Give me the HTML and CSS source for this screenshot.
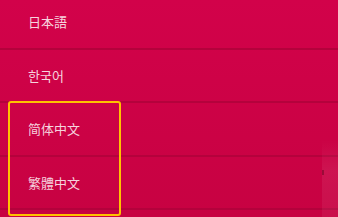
FILE: index.html
```html
<!DOCTYPE html>
<html>
<head>
	<meta charset="UTF-8">
	<title>Language</title>
	<link rel="stylesheet" href="styles.css">
</head>
<body>
	<div class="screen">
		<ul class="lang-list">
			<li class="lang-item lang-jp">日本語</li>
			<li class="lang-item lang-kr">한국어</li>
			<li class="lang-item lang-sc">简体中文</li>
			<li class="lang-item lang-tc">繁體中文</li>
		</ul>
		<div class="focus-box"></div>
		<div class="side-fade"><span class="side-notch"></span></div>
	</div>
</body>
</html>
```

FILE: styles.css
```css
* {
	margin: 0;
	padding: 0;
	box-sizing: border-box;
}

html, body {
	width: 100%;
	height: 100%;
	overflow: hidden;
}

.screen {
	position: relative;
	width: 338px;
	height: 217px;
	overflow: hidden;
	background: linear-gradient(to bottom, #d2024a, #c70242);
}

.lang-list {
	list-style: none;
	margin-top: -4px;
}

.lang-item {
	display: flex;
	align-items: center;
	height: 53.5px;
	padding-left: 28px;
	border-bottom: 2px solid #b4023c;
	color: #f6d3de;
	font-size: 13px;
	font-family: "Noto Sans CJK SC", sans-serif;
}

.lang-jp { font-family: "Noto Sans CJK JP", sans-serif; }
.lang-kr { font-family: "Noto Sans CJK KR", sans-serif; }
.lang-sc { font-family: "Noto Sans CJK SC", sans-serif; }
.lang-tc { font-family: "Noto Sans CJK TC", sans-serif; }

.focus-box {
	position: absolute;
	left: 8px;
	top: 101px;
	width: 113px;
	height: 115px;
	border: 2px solid #ffc200;
	border-radius: 3px;
}

.side-fade {
	position: absolute;
	right: 0;
	top: 140px;
	width: 16px;
	height: 77px;
	background: linear-gradient(to bottom, rgba(255,255,255,0), rgba(255,255,255,0.07) 40%, rgba(255,255,255,0.05));
}

.side-notch {
	position: absolute;
	left: 0;
	top: 30px;
	width: 2px;
	height: 5px;
	background: rgba(80,0,20,0.4);
}
```
